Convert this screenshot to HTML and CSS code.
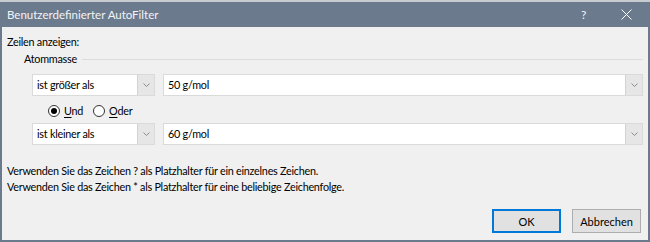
FILE: index.html
```html
<!DOCTYPE html>
<html lang="de">
<head>
<meta charset="utf-8">
<title>Benutzerdefinierter AutoFilter</title>
<link rel="stylesheet" href="styles.css">
</head>
<body>
<div class="backdrop"></div>
<div class="dialog">
  <div class="titlebar">
    <span class="title">Benutzerdefinierter AutoFilter</span>
    <span class="help">?</span>
    <span class="close"><svg width="11" height="11" viewBox="0 0 11 11"><path d="M0.5 0.5 L10.5 10.5 M10.5 0.5 L0.5 10.5" stroke="#ffffff" stroke-width="1" fill="none"/></svg></span>
  </div>
  <div class="content">
    <div class="label">Zeilen anzeigen:</div>
    <div class="group">
      <div class="legend"><span>Atommasse</span></div>
      <div class="row first-row">
        <div class="combo op">
          <span class="value">ist größer als</span>
          <span class="btn"><svg width="7" height="4" viewBox="0 0 7 4"><path d="M0.5 0.5 L3.5 3.5 L6.5 0.5" stroke="#808080" fill="none" stroke-width="0.9"/></svg></span>
        </div>
        <div class="combo val">
          <span class="value">50 g/mol</span>
          <span class="btn"><svg width="7" height="4" viewBox="0 0 7 4"><path d="M0.5 0.5 L3.5 3.5 L6.5 0.5" stroke="#808080" fill="none" stroke-width="0.9"/></svg></span>
        </div>
      </div>
      <div class="radios">
        <span class="radio checked"></span><span class="rlabel"><u>U</u>nd</span>
        <span class="radio"></span><span class="rlabel"><u>O</u>der</span>
      </div>
      <div class="row">
        <div class="combo op">
          <span class="value">ist kleiner als</span>
          <span class="btn"><svg width="7" height="4" viewBox="0 0 7 4"><path d="M0.5 0.5 L3.5 3.5 L6.5 0.5" stroke="#808080" fill="none" stroke-width="0.9"/></svg></span>
        </div>
        <div class="combo val">
          <span class="value">60 g/mol</span>
          <span class="btn"><svg width="7" height="4" viewBox="0 0 7 4"><path d="M0.5 0.5 L3.5 3.5 L6.5 0.5" stroke="#808080" fill="none" stroke-width="0.9"/></svg></span>
        </div>
      </div>
    </div>
    <p class="hint first">Verwenden Sie das Zeichen ? als Platzhalter für ein einzelnes Zeichen.</p>
    <p class="hint">Verwenden Sie das Zeichen * als Platzhalter für eine beliebige Zeichenfolge.</p>
    <div class="buttons">
      <button class="button default">OK</button>
      <button class="button">Abbrechen</button>
    </div>
  </div>
</div>
</body>
</html>
```
FILE: styles.css
```css
* { box-sizing: border-box; }
html, body {
  margin: 0;
  padding: 0;
  width: 650px;
  height: 242px;
  overflow: hidden;
  background: #f0f0f0;
}
body {
  font-family: Lato, "Noto Sans", sans-serif;
  font-size: 10.8px;
  letter-spacing: -0.25px;
  color: #000;
}
.backdrop {
  height: 2px;
  background: #c8ccd1;
}
.dialog {
  height: 240px;
  border: 2px solid #6b7a8d;
  border-top: 0;
  display: flex;
  flex-direction: column;
  background: #f0f0f0;
}
.titlebar {
  height: 25px;
  background: #6b7a8d;
  display: flex;
  align-items: center;
  color: #fff;
  padding-left: 7px;
  margin: 0 -2px;
}
.title {
  flex: 1;
  font-size: 11.5px;
  letter-spacing: 0;
  color: #f2f4f6;
}
.help {
  width: 12px;
  font-size: 12px;
  letter-spacing: 0;
  margin-right: 28px;
  color: #f2f4f6;
}
.close {
  width: 11px;
  margin-right: 18px;
  display: flex;
  align-items: center;
}
.content {
  flex: 1;
  padding: 7px 5px 7px 5px;
  display: flex;
  flex-direction: column;
}
.label, .legend, .hint, .radios {
  line-height: 16px;
  height: 16px;
}
.group {
  margin-top: 1px;
}
.legend {
  display: flex;
  align-items: center;
  padding-left: 17px;
  gap: 5px;
}
.legend::after {
  content: "";
  flex: 1;
  height: 1px;
  background: #dcdcdc;
}
.row {
  display: flex;
  gap: 8px;
  padding-left: 25px;
  height: 22px;
}
.row.first-row { margin-top: 7px; }
.combo {
  display: flex;
  height: 22px;
  border: 1px solid #dadada;
  background: #fff;
}
.combo.op { width: 123px; }
.combo.val { width: 480px; }
.value {
  flex: 1;
  padding-left: 4px;
  line-height: 20px;
  white-space: nowrap;
  overflow: hidden;
}
.btn {
  width: 17px;
  background: #e6e6e6;
  border-left: 1px solid #d2d2d2;
  display: flex;
  align-items: center;
  justify-content: center;
}
.radios {
  display: flex;
  align-items: center;
  margin: 7px 0 4px 0;
  padding-left: 41px;
}
.radio {
  width: 12px;
  height: 12px;
  border: 1px solid #333;
  border-radius: 50%;
  background: #fff;
  display: flex;
  align-items: center;
  justify-content: center;
  margin-right: 4px;
}
.radio.checked::after {
  content: "";
  width: 6px;
  height: 6px;
  border-radius: 50%;
  background: #000;
}
.rlabel {
  margin-right: 10px;
}
.rlabel u { text-underline-offset: 2px; }
.hint {
  margin: 0;
}
.hint.first { margin-top: 18px; }
.buttons {
  margin-top: 14px;
  display: flex;
  justify-content: flex-end;
  gap: 11px;
  padding-right: 2px;
}
.button {
  font-family: inherit;
  font-size: 11px;
  letter-spacing: 0;
  width: 69px;
  height: 24px;
  background: #e1e1e1;
  border: 1px solid #adadad;
  padding: 0;
  color: #000;
}
.button.default {
  border: 2px solid #0078d7;
}
```
